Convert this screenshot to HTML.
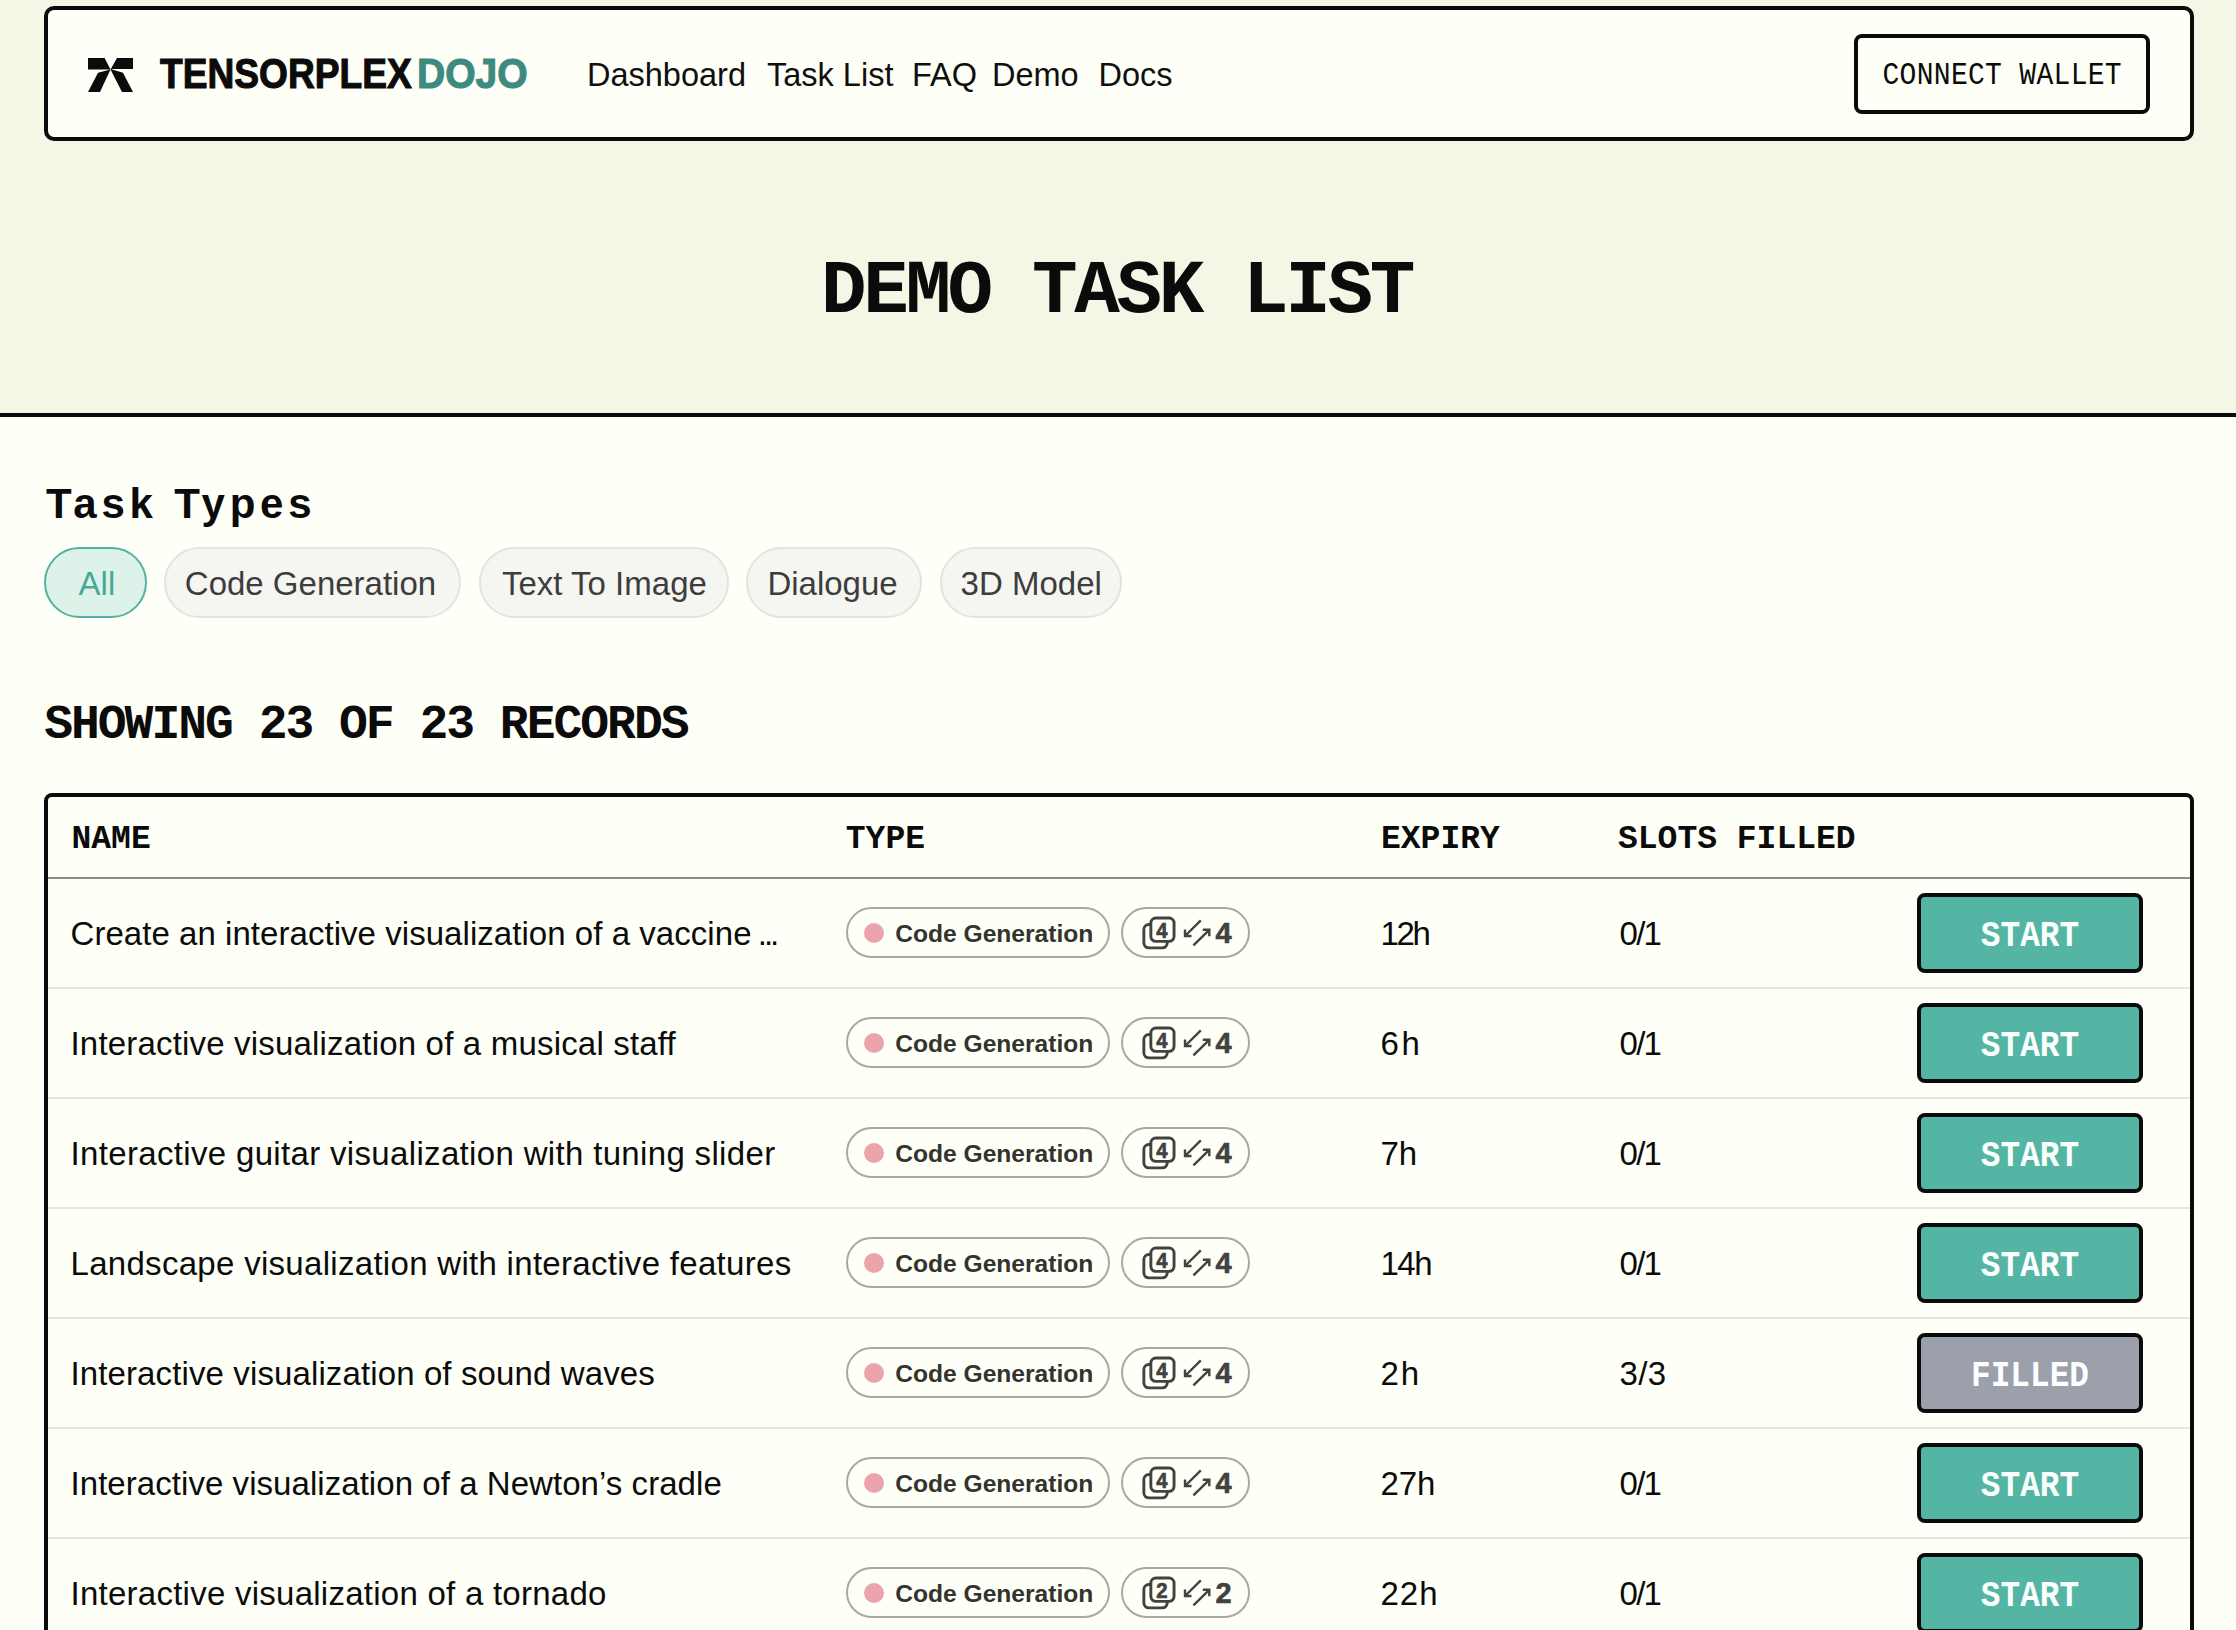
<!DOCTYPE html>
<html><head><meta charset="utf-8"><style>
*{margin:0;padding:0;box-sizing:border-box}
html,body{width:2236px;height:1630px;overflow:hidden}
body{background:#fefff6;font-family:"Liberation Sans",sans-serif;color:#0b0b0b;position:relative}
.a{position:absolute;white-space:nowrap;line-height:1}
#top{position:absolute;left:0;top:0;width:2236px;height:413px;background:#f4f6e6}
#sep{position:absolute;left:0;top:413px;width:2236px;height:4px;background:#0b0b0b}
#hdr{position:absolute;left:44px;top:6px;width:2150px;height:135px;border:4px solid #0b0b0b;border-radius:10px;background:#fefff6}
.lt{font-weight:bold;font-size:42px;transform-origin:0 0;-webkit-text-stroke:1.1px currentColor}
.nav{font-size:32.5px;color:#0f0f0f}
#cw{position:absolute;left:1854px;top:34px;width:296px;height:80px;border:4px solid #0b0b0b;border-radius:8px}
.mono{font-family:"Liberation Mono",monospace}
.chip{position:absolute;top:547px;height:71px;border-radius:36px;border:2px solid #e4e4de;background:#f5f5f2;color:#3d3d3d;font-size:33px}
.chip.on{border-color:#55b1a2;background:#ddf2e9;color:#4aa897}
.chip span{position:absolute;top:18px;white-space:nowrap;line-height:1}
#tbl{position:absolute;left:44px;top:793px;width:2150px;height:900px;border:4px solid #0b0b0b;border-radius:8px}
.th{font-family:"Liberation Mono",monospace;font-weight:bold;font-size:33px}
#hsep{position:absolute;left:48px;top:877px;width:2142px;height:2px;background:#8d8d85}
.rsep{position:absolute;left:48px;width:2142px;height:2px;background:#e7e7e0}
.name{font-size:33px;color:#0b0b0b}
.badge{position:absolute;height:51px;border:2px solid #a9a99f;border-radius:26px}
.dot{position:absolute;width:20px;height:20px;border-radius:50%;background:#eba4ac}
.btxt{font-weight:bold;font-size:24.6px;color:#333330}
.val{font-size:33px;color:#0b0b0b}
.btn{position:absolute;left:1917px;width:226px;height:80px;border:4px solid #0b0b0b;border-radius:8px;background:#55b5a5}
.btn.f{background:#9ca0ab}
.bt{font-family:"Liberation Mono",monospace;font-weight:bold;font-size:36px;color:#fbfffd;transform:scaleX(0.91);transform-origin:50% 0;width:226px;text-align:center}
</style></head><body>
<div id="top"></div><div id="sep"></div><div id="hdr"></div>
<svg class="a" style="left:88px;top:58px" width="45" height="34" viewBox="0 0 45 34"><path fill="#0b0b0b" d="M0 0H16.6L22.5 11.5L29 0H45V11H22.5L35 14.8L45 34H34L22.5 11.5L12 34H0L10 14.8L22.5 11.5H0Z"/></svg>
<div class="a lt" style="left:159.6px;top:52.8px;transform:scaleX(0.884)">TENSORPLEX</div>
<div class="a lt" style="left:417.2px;top:52.8px;color:#3e8a80;transform:scaleX(0.93)">DOJO</div>
<div class="a nav" style="left:587px;top:59px">Dashboard</div>
<div class="a nav" style="left:767px;top:59px">Task List</div>
<div class="a nav" style="left:912px;top:59px">FAQ</div>
<div class="a nav" style="left:992px;top:59px">Demo</div>
<div class="a nav" style="left:1098.5px;top:59px">Docs</div>
<div id="cw"></div>
<div class="a mono" style="left:1882.5px;top:60.7px;font-size:28px;letter-spacing:0.3px;transform:scaleY(1.11);transform-origin:0 0">CONNECT WALLET</div>
<div class="a mono" style="left:821px;top:254px;font-size:76px;font-weight:bold;letter-spacing:-3.4px">DEMO TASK LIST</div>
<div class="a" style="left:46px;top:483px;font-size:42px;font-weight:bold;letter-spacing:4.78px">Task Types</div>
<div class="chip on" style="left:44px;width:103px"><span style="left:32.6px">All</span></div>
<div class="chip" style="left:163.5px;width:297.5px"><span style="left:19.3px">Code Generation</span></div>
<div class="chip" style="left:478.5px;width:250px"><span style="left:21.5px">Text To Image</span></div>
<div class="chip" style="left:746.3px;width:175.5px"><span style="left:19.1px">Dialogue</span></div>
<div class="chip" style="left:939.5px;width:182.5px"><span style="left:19.1px">3D Model</span></div>
<div class="a mono" style="left:44.2px;top:701px;font-size:48px;font-weight:bold;letter-spacing:-2px">SHOWING 23 OF 23 RECORDS</div>
<div id="tbl"></div>
<div class="a th" style="left:71.5px;top:823px">NAME</div>
<div class="a th" style="left:845.8px;top:823px">TYPE</div>
<div class="a th" style="left:1381px;top:823px">EXPIRY</div>
<div class="a th" style="left:1618px;top:823px">SLOTS FILLED</div>
<div id="hsep"></div>
<div class="a name" style="left:70.5px;top:917px;letter-spacing:0.049px">Create an interactive visualization of a vaccine<span style="letter-spacing:-3px"> ...</span></div>
<div class="badge" style="left:846px;top:907px;width:264px"></div>
<div class="dot" style="left:864px;top:923px"></div>
<div class="a btxt" style="left:895.2px;top:922px">Code Generation</div>
<div class="badge" style="left:1121px;top:907px;width:129px"></div>
<svg class="a" style="left:1140px;top:914px" width="40" height="36" viewBox="0 0 40 36"><rect x="3.85" y="10.45" width="23.4" height="23.4" rx="5" fill="none" stroke="#424240" stroke-width="2.9"/><rect x="10.85" y="3.95" width="23.2" height="23.4" rx="5" fill="#fefff6" stroke="#424240" stroke-width="2.9"/><text transform="translate(21.9 23.6) scale(0.9 1)" font-family="Liberation Sans" font-weight="bold" font-size="22.5" text-anchor="middle" fill="#424240" stroke="#424240" stroke-width="0.7">4</text></svg>
<svg class="a" style="left:1182px;top:918px" width="30" height="30" viewBox="0 0 30 30"><path d="M18.8 2.4L3 18M3 11.5V18H9.5M11.4 27.4L27.3 11.8M20.8 11.8H27.3V18.3" fill="none" stroke="#424240" stroke-width="2.4" stroke-linecap="butt"/></svg>
<div class="a btxt" style="left:1215.5px;top:919px;font-size:29px;color:#424240;-webkit-text-stroke:0.6px #424240">4</div>
<div class="a val" style="left:1380.4px;top:917px;letter-spacing:-2.3px">12h</div>
<div class="a val" style="left:1619.6px;top:917px;letter-spacing:-1.75px">0/1</div>
<div class="btn" style="top:893px"></div>
<div class="a bt" style="left:1917px;top:918.6px">START</div>
<div class="rsep" style="top:987px"></div>
<div class="a name" style="left:70.5px;top:1027px;letter-spacing:0.184px">Interactive visualization of a musical staff</div>
<div class="badge" style="left:846px;top:1017px;width:264px"></div>
<div class="dot" style="left:864px;top:1033px"></div>
<div class="a btxt" style="left:895.2px;top:1032px">Code Generation</div>
<div class="badge" style="left:1121px;top:1017px;width:129px"></div>
<svg class="a" style="left:1140px;top:1024px" width="40" height="36" viewBox="0 0 40 36"><rect x="3.85" y="10.45" width="23.4" height="23.4" rx="5" fill="none" stroke="#424240" stroke-width="2.9"/><rect x="10.85" y="3.95" width="23.2" height="23.4" rx="5" fill="#fefff6" stroke="#424240" stroke-width="2.9"/><text transform="translate(21.9 23.6) scale(0.9 1)" font-family="Liberation Sans" font-weight="bold" font-size="22.5" text-anchor="middle" fill="#424240" stroke="#424240" stroke-width="0.7">4</text></svg>
<svg class="a" style="left:1182px;top:1028px" width="30" height="30" viewBox="0 0 30 30"><path d="M18.8 2.4L3 18M3 11.5V18H9.5M11.4 27.4L27.3 11.8M20.8 11.8H27.3V18.3" fill="none" stroke="#424240" stroke-width="2.4" stroke-linecap="butt"/></svg>
<div class="a btxt" style="left:1215.5px;top:1029px;font-size:29px;color:#424240;-webkit-text-stroke:0.6px #424240">4</div>
<div class="a val" style="left:1380.4px;top:1027px;letter-spacing:2.7px">6h</div>
<div class="a val" style="left:1619.6px;top:1027px;letter-spacing:-1.75px">0/1</div>
<div class="btn" style="top:1003px"></div>
<div class="a bt" style="left:1917px;top:1028.6px">START</div>
<div class="rsep" style="top:1097px"></div>
<div class="a name" style="left:70.5px;top:1137px;letter-spacing:0.336px">Interactive guitar visualization with tuning slider</div>
<div class="badge" style="left:846px;top:1127px;width:264px"></div>
<div class="dot" style="left:864px;top:1143px"></div>
<div class="a btxt" style="left:895.2px;top:1142px">Code Generation</div>
<div class="badge" style="left:1121px;top:1127px;width:129px"></div>
<svg class="a" style="left:1140px;top:1134px" width="40" height="36" viewBox="0 0 40 36"><rect x="3.85" y="10.45" width="23.4" height="23.4" rx="5" fill="none" stroke="#424240" stroke-width="2.9"/><rect x="10.85" y="3.95" width="23.2" height="23.4" rx="5" fill="#fefff6" stroke="#424240" stroke-width="2.9"/><text transform="translate(21.9 23.6) scale(0.9 1)" font-family="Liberation Sans" font-weight="bold" font-size="22.5" text-anchor="middle" fill="#424240" stroke="#424240" stroke-width="0.7">4</text></svg>
<svg class="a" style="left:1182px;top:1138px" width="30" height="30" viewBox="0 0 30 30"><path d="M18.8 2.4L3 18M3 11.5V18H9.5M11.4 27.4L27.3 11.8M20.8 11.8H27.3V18.3" fill="none" stroke="#424240" stroke-width="2.4" stroke-linecap="butt"/></svg>
<div class="a btxt" style="left:1215.5px;top:1139px;font-size:29px;color:#424240;-webkit-text-stroke:0.6px #424240">4</div>
<div class="a val" style="left:1380.4px;top:1137px;letter-spacing:0px">7h</div>
<div class="a val" style="left:1619.6px;top:1137px;letter-spacing:-1.75px">0/1</div>
<div class="btn" style="top:1113px"></div>
<div class="a bt" style="left:1917px;top:1138.6px">START</div>
<div class="rsep" style="top:1207px"></div>
<div class="a name" style="left:70.5px;top:1247px;letter-spacing:0.300px">Landscape visualization with interactive features</div>
<div class="badge" style="left:846px;top:1237px;width:264px"></div>
<div class="dot" style="left:864px;top:1253px"></div>
<div class="a btxt" style="left:895.2px;top:1252px">Code Generation</div>
<div class="badge" style="left:1121px;top:1237px;width:129px"></div>
<svg class="a" style="left:1140px;top:1244px" width="40" height="36" viewBox="0 0 40 36"><rect x="3.85" y="10.45" width="23.4" height="23.4" rx="5" fill="none" stroke="#424240" stroke-width="2.9"/><rect x="10.85" y="3.95" width="23.2" height="23.4" rx="5" fill="#fefff6" stroke="#424240" stroke-width="2.9"/><text transform="translate(21.9 23.6) scale(0.9 1)" font-family="Liberation Sans" font-weight="bold" font-size="22.5" text-anchor="middle" fill="#424240" stroke="#424240" stroke-width="0.7">4</text></svg>
<svg class="a" style="left:1182px;top:1248px" width="30" height="30" viewBox="0 0 30 30"><path d="M18.8 2.4L3 18M3 11.5V18H9.5M11.4 27.4L27.3 11.8M20.8 11.8H27.3V18.3" fill="none" stroke="#424240" stroke-width="2.4" stroke-linecap="butt"/></svg>
<div class="a btxt" style="left:1215.5px;top:1249px;font-size:29px;color:#424240;-webkit-text-stroke:0.6px #424240">4</div>
<div class="a val" style="left:1380.4px;top:1247px;letter-spacing:-1.45px">14h</div>
<div class="a val" style="left:1619.6px;top:1247px;letter-spacing:-1.75px">0/1</div>
<div class="btn" style="top:1223px"></div>
<div class="a bt" style="left:1917px;top:1248.6px">START</div>
<div class="rsep" style="top:1317px"></div>
<div class="a name" style="left:70.5px;top:1357px;letter-spacing:0.118px">Interactive visualization of sound waves</div>
<div class="badge" style="left:846px;top:1347px;width:264px"></div>
<div class="dot" style="left:864px;top:1363px"></div>
<div class="a btxt" style="left:895.2px;top:1362px">Code Generation</div>
<div class="badge" style="left:1121px;top:1347px;width:129px"></div>
<svg class="a" style="left:1140px;top:1354px" width="40" height="36" viewBox="0 0 40 36"><rect x="3.85" y="10.45" width="23.4" height="23.4" rx="5" fill="none" stroke="#424240" stroke-width="2.9"/><rect x="10.85" y="3.95" width="23.2" height="23.4" rx="5" fill="#fefff6" stroke="#424240" stroke-width="2.9"/><text transform="translate(21.9 23.6) scale(0.9 1)" font-family="Liberation Sans" font-weight="bold" font-size="22.5" text-anchor="middle" fill="#424240" stroke="#424240" stroke-width="0.7">4</text></svg>
<svg class="a" style="left:1182px;top:1358px" width="30" height="30" viewBox="0 0 30 30"><path d="M18.8 2.4L3 18M3 11.5V18H9.5M11.4 27.4L27.3 11.8M20.8 11.8H27.3V18.3" fill="none" stroke="#424240" stroke-width="2.4" stroke-linecap="butt"/></svg>
<div class="a btxt" style="left:1215.5px;top:1359px;font-size:29px;color:#424240;-webkit-text-stroke:0.6px #424240">4</div>
<div class="a val" style="left:1380.4px;top:1357px;letter-spacing:1.9px">2h</div>
<div class="a val" style="left:1619.6px;top:1357px;letter-spacing:0.35px">3/3</div>
<div class="btn f" style="top:1333px"></div>
<div class="a bt" style="left:1917px;top:1358.6px">FILLED</div>
<div class="rsep" style="top:1427px"></div>
<div class="a name" style="left:70.5px;top:1467px;letter-spacing:0.056px">Interactive visualization of a Newton’s cradle</div>
<div class="badge" style="left:846px;top:1457px;width:264px"></div>
<div class="dot" style="left:864px;top:1473px"></div>
<div class="a btxt" style="left:895.2px;top:1472px">Code Generation</div>
<div class="badge" style="left:1121px;top:1457px;width:129px"></div>
<svg class="a" style="left:1140px;top:1464px" width="40" height="36" viewBox="0 0 40 36"><rect x="3.85" y="10.45" width="23.4" height="23.4" rx="5" fill="none" stroke="#424240" stroke-width="2.9"/><rect x="10.85" y="3.95" width="23.2" height="23.4" rx="5" fill="#fefff6" stroke="#424240" stroke-width="2.9"/><text transform="translate(21.9 23.6) scale(0.9 1)" font-family="Liberation Sans" font-weight="bold" font-size="22.5" text-anchor="middle" fill="#424240" stroke="#424240" stroke-width="0.7">4</text></svg>
<svg class="a" style="left:1182px;top:1468px" width="30" height="30" viewBox="0 0 30 30"><path d="M18.8 2.4L3 18M3 11.5V18H9.5M11.4 27.4L27.3 11.8M20.8 11.8H27.3V18.3" fill="none" stroke="#424240" stroke-width="2.4" stroke-linecap="butt"/></svg>
<div class="a btxt" style="left:1215.5px;top:1469px;font-size:29px;color:#424240;-webkit-text-stroke:0.6px #424240">4</div>
<div class="a val" style="left:1380.4px;top:1467px;letter-spacing:0px">27h</div>
<div class="a val" style="left:1619.6px;top:1467px;letter-spacing:-1.75px">0/1</div>
<div class="btn" style="top:1443px"></div>
<div class="a bt" style="left:1917px;top:1468.6px">START</div>
<div class="rsep" style="top:1537px"></div>
<div class="a name" style="left:70.5px;top:1577px;letter-spacing:0.254px">Interactive visualization of a tornado</div>
<div class="badge" style="left:846px;top:1567px;width:264px"></div>
<div class="dot" style="left:864px;top:1583px"></div>
<div class="a btxt" style="left:895.2px;top:1582px">Code Generation</div>
<div class="badge" style="left:1121px;top:1567px;width:129px"></div>
<svg class="a" style="left:1140px;top:1574px" width="40" height="36" viewBox="0 0 40 36"><rect x="3.85" y="10.45" width="23.4" height="23.4" rx="5" fill="none" stroke="#424240" stroke-width="2.9"/><rect x="10.85" y="3.95" width="23.2" height="23.4" rx="5" fill="#fefff6" stroke="#424240" stroke-width="2.9"/><text transform="translate(21.9 23.6) scale(0.9 1)" font-family="Liberation Sans" font-weight="bold" font-size="22.5" text-anchor="middle" fill="#424240" stroke="#424240" stroke-width="0.7">2</text></svg>
<svg class="a" style="left:1182px;top:1578px" width="30" height="30" viewBox="0 0 30 30"><path d="M18.8 2.4L3 18M3 11.5V18H9.5M11.4 27.4L27.3 11.8M20.8 11.8H27.3V18.3" fill="none" stroke="#424240" stroke-width="2.4" stroke-linecap="butt"/></svg>
<div class="a btxt" style="left:1215.5px;top:1579px;font-size:29px;color:#424240;-webkit-text-stroke:0.6px #424240">2</div>
<div class="a val" style="left:1380.4px;top:1577px;letter-spacing:1.1px">22h</div>
<div class="a val" style="left:1619.6px;top:1577px;letter-spacing:-1.75px">0/1</div>
<div class="btn" style="top:1553px"></div>
<div class="a bt" style="left:1917px;top:1578.6px">START</div>
</body></html>
